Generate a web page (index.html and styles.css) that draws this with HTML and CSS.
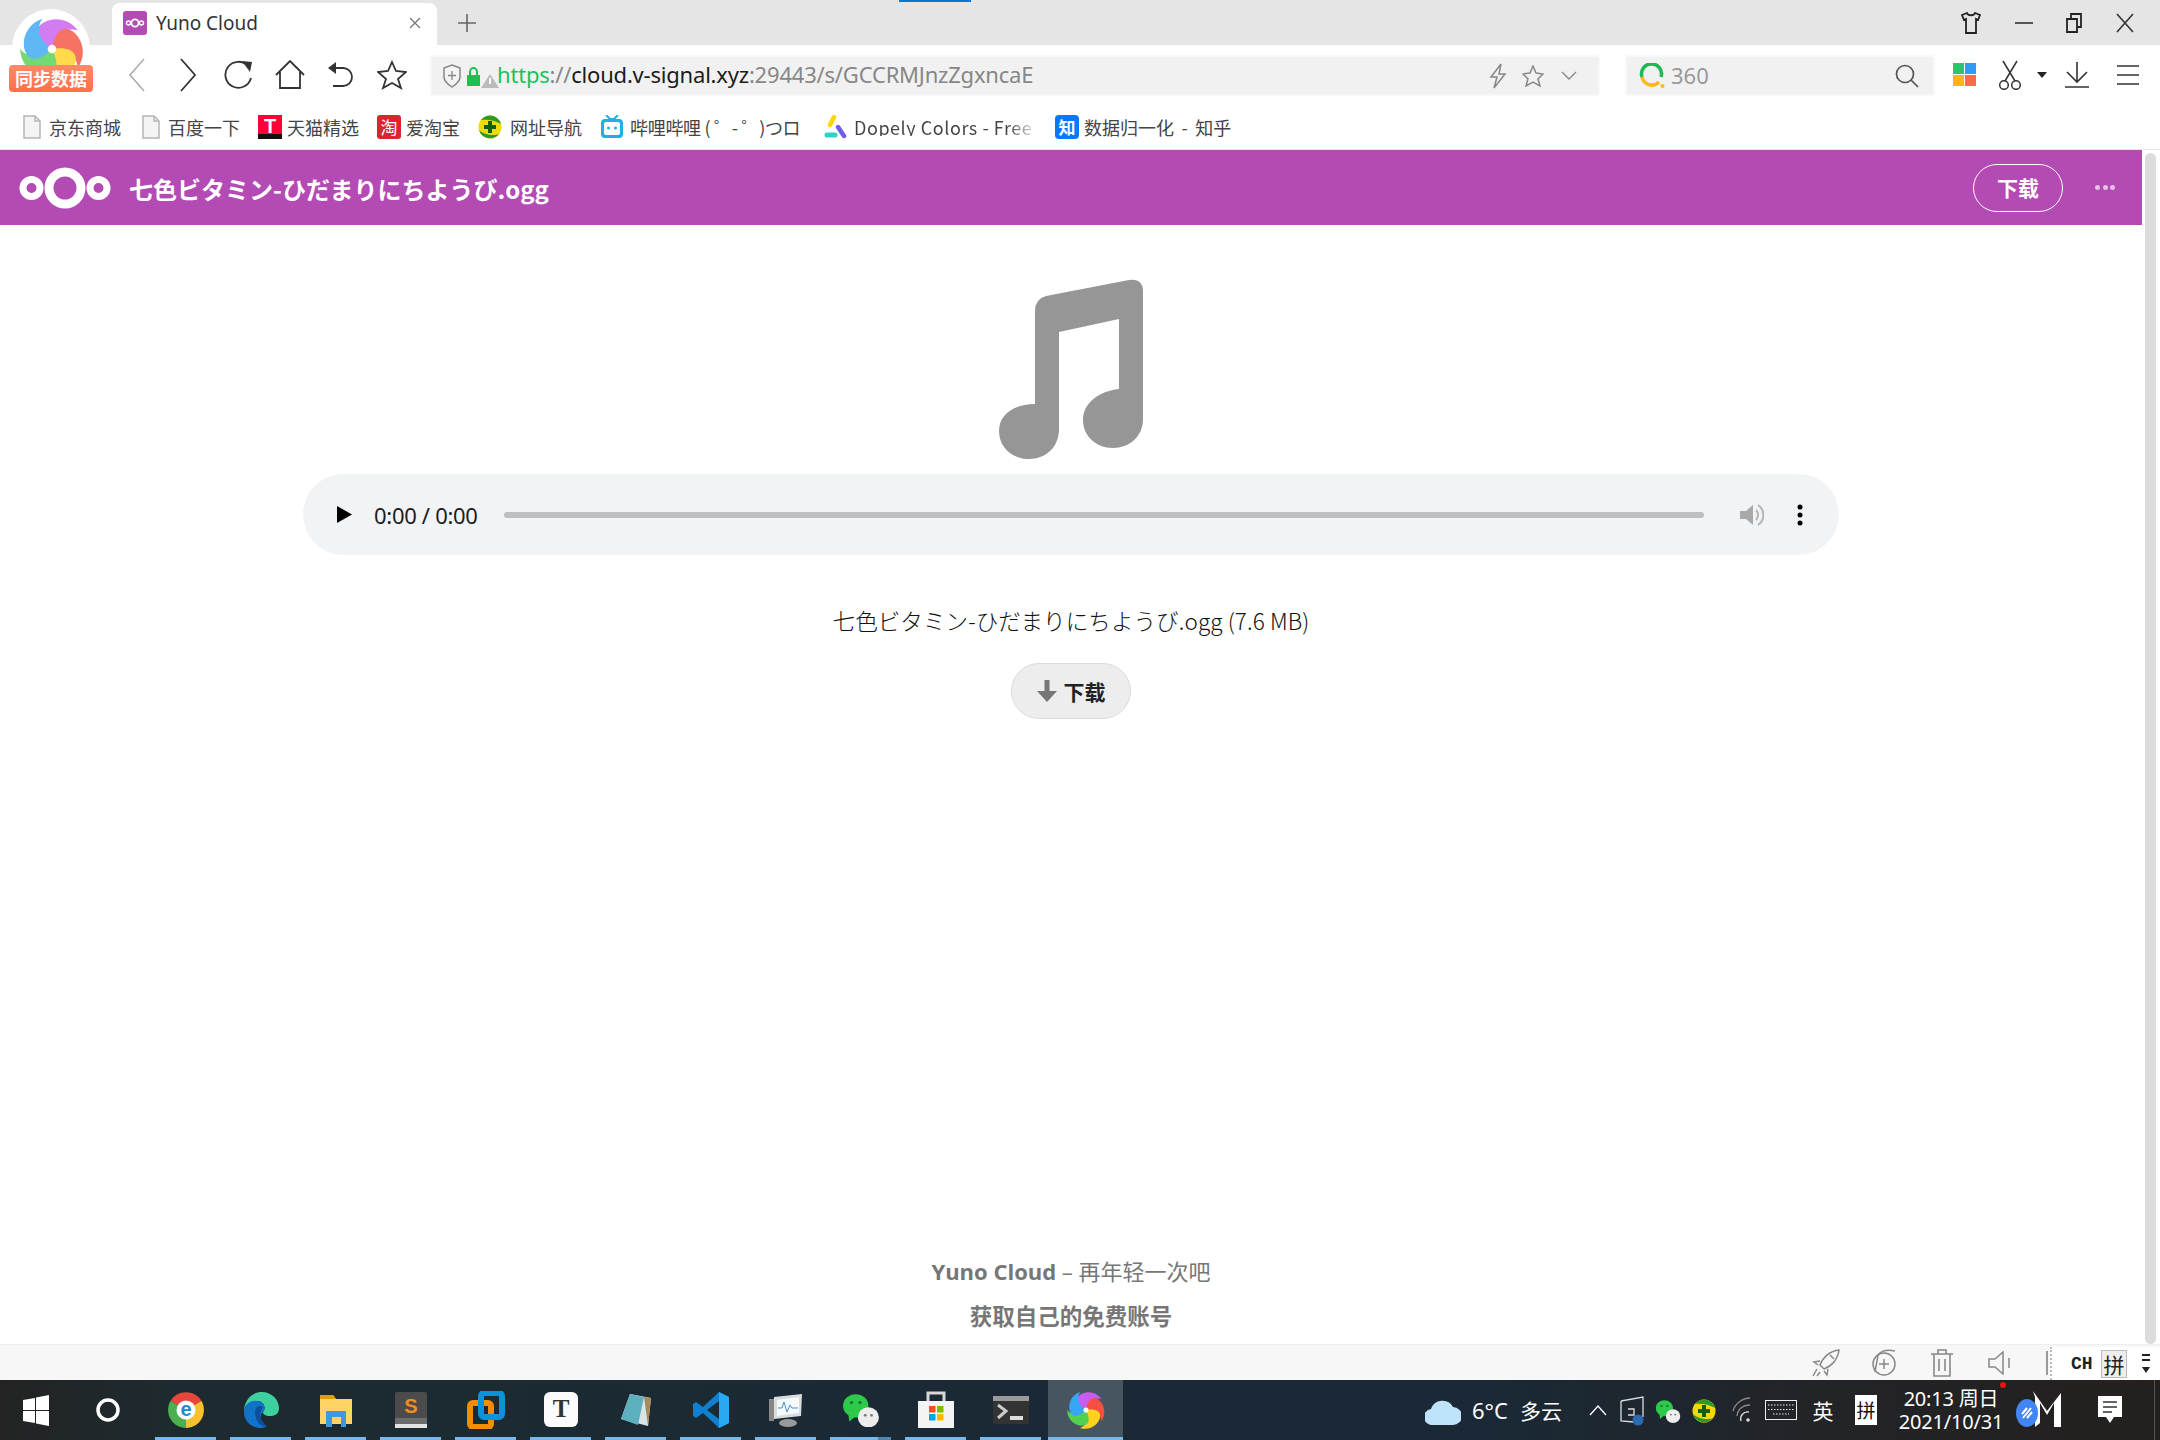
FILE: index.html
```html
<!DOCTYPE html>
<html lang="zh-CN">
<head>
<meta charset="utf-8">
<title>Yuno Cloud</title>
<link rel="stylesheet" href="styles.css">
</head>
<body>
<svg class="defs" width="0" height="0">
  <defs>
    <g id="swirl">
      <path fill="#c95cf0" d="M0 0C-8-4-14-10-12-16-7-26 12-28 21-15 12-18 3-12 0 0Z"/>
      <path fill="#f5503f" d="M0 0C-8-4-14-10-12-16-7-26 12-28 21-15 12-18 3-12 0 0Z" transform="rotate(72)"/>
      <path fill="#ffd21e" d="M0 0C-8-4-14-10-12-16-7-26 12-28 21-15 12-18 3-12 0 0Z" transform="rotate(144)"/>
      <path fill="#52d04f" d="M0 0C-8-4-14-10-12-16-7-26 12-28 21-15 12-18 3-12 0 0Z" transform="rotate(216)"/>
      <path fill="#36a7f5" d="M0 0C-8-4-14-10-12-16-7-26 12-28 21-15 12-18 3-12 0 0Z" transform="rotate(288)"/>
      <circle r="3.5" fill="#fff"/>
    </g>
    <g id="file-icon">
      <path d="M4 2H15L20 7V24H4Z" fill="#f4f4f4" stroke="#b5b5b5" stroke-width="1.5"/>
      <path d="M15 2V7H20" fill="none" stroke="#b5b5b5" stroke-width="1.5"/>
    </g>
    <g id="green-shield">
      <circle cx="12" cy="12" r="11.5" fill="#f2d90a"/>
      <path d="M12 .5A11.5 11.5 0 0 1 23 9C17 5 8 4 3 5A11.500 11.500 0 0 1 12 .5ZM1 15C6 20 16 21 21 19A11.500 11.500 0 0 1 1 15Z" fill="#2c9a2a"/>
      <path d="M10 6H14V10H18V14H14V18H10V14H6V10H10Z" fill="#0e5f12"/>
    </g>
    <g id="chat-bubbles">
      <ellipse cx="13" cy="12" rx="12" ry="11" fill="#2ec94a"/>
      <path d="M6 20L7 27 13 22Z" fill="#2ec94a"/>
      <circle cx="9" cy="9" r="1.600" fill="#157a2a"/>
      <circle cx="17" cy="9" r="1.600" fill="#157a2a"/>
      <ellipse cx="25" cy="23" rx="10" ry="9.500" fill="#ededed"/>
      <circle cx="22" cy="21" r="1.300" fill="#777"/>
      <circle cx="28" cy="21" r="1.300" fill="#777"/>
    </g>
  </defs>
</svg>

<div class="browser">
  <div class="titlebar">
    <div class="tab">
      <svg class="favicon" width="24" height="24" viewBox="0 0 24 24"><rect width="24" height="24" rx="3" fill="#b44ab4"/><g fill="none" stroke="#fff"><circle cx="12" cy="12" r="3.600" stroke-width="1.800"/><circle cx="5.500" cy="12" r="2" stroke-width="1.400"/><circle cx="18.500" cy="12" r="2" stroke-width="1.400"/></g></svg>
      <span class="tab-title">Yuno Cloud</span>
      <svg width="14" height="14" viewBox="0 0 14 14" class="tab-close"><path d="M2 2L12 12M12 2L2 12" stroke="#777" stroke-width="1.300"/></svg>
    </div>
    <svg class="tab-plus" width="18" height="18" viewBox="0 0 18 18"><path d="M9 0V18M0 9H18" stroke="#666" stroke-width="1.600"/></svg>
    <div class="blue-mark"></div>
    <div class="window-controls">
      <svg width="20" height="22" viewBox="0 0 20 22"><path d="M6 1L1 3 3 8 5 7V21H15V7L17 8 19 3 14 1C13 4 7 4 6 1Z" fill="none" stroke="#222" stroke-width="1.800"/></svg>
      <svg width="18" height="18" viewBox="0 0 18 18"><path d="M0 9H18" stroke="#333" stroke-width="1.600"/></svg>
      <svg width="16" height="20" viewBox="0 0 16 20"><path d="M1 6H11V19H1ZM5 6V1H15V14H11" fill="none" stroke="#222" stroke-width="1.800"/></svg>
      <svg width="18" height="20" viewBox="0 0 18 20"><path d="M1 1L17 19M17 1L1 19" stroke="#333" stroke-width="1.600"/></svg>
    </div>
  </div>

  <div class="toolbar">
    <div class="nav-cell"><svg width="18" height="36" viewBox="0 0 18 36"><path d="M16 2L2 18 16 34" fill="none" stroke="#aaa" stroke-width="1.500"/></svg></div>
    <div class="nav-cell"><svg width="18" height="36" viewBox="0 0 18 36"><path d="M2 2L16 18 2 34" fill="none" stroke="#333" stroke-width="1.800"/></svg></div>
    <div class="nav-cell"><svg width="30" height="32" viewBox="0 0 30 32"><path d="M24 6A13 13 0 1 0 27 18" fill="none" stroke="#333" stroke-width="1.800" transform="translate(0 1)"/><path d="M18 2L28 3 26 13Z" fill="#333"/></svg></div>
    <div class="nav-cell"><svg width="30" height="30" viewBox="0 0 30 30"><path d="M1 15L15 1 29 15M5 12V28H25V12" fill="none" stroke="#333" stroke-width="1.800"/></svg></div>
    <div class="nav-cell"><svg width="26" height="28" viewBox="0 0 26 28"><path d="M6 7H15A9 9 0 0 1 15 25H5" fill="none" stroke="#333" stroke-width="1.800"/><path d="M0 7L8 1V13Z" fill="#333"/></svg></div>
    <div class="nav-cell"><svg width="30" height="30" viewBox="0 0 30 30"><path d="M15 2L19 11 29 12 21 19 24 28 15 23 6 28 9 19 1 12 11 11Z" fill="none" stroke="#333" stroke-width="1.800"/></svg></div>

    <div class="addressbar">
      <svg class="sec" width="18" height="24" viewBox="0 0 18 24"><path d="M9 1L17 4V13C17 18 12 21 9 23 6 21 1 18 1 13V4Z" fill="#f4f4f4" stroke="#888" stroke-width="1.500"/><path d="M9 7V16M5 11.500H13" stroke="#888" stroke-width="1.300"/></svg>
      <svg class="sec-lock" width="34" height="24" viewBox="0 0 34 24"><path d="M3 8A4.500 5 0 0 1 12 8V11H10V8A2.500 3 0 0 0 5 8V11H3Z" fill="#17c251"/><rect x="1" y="11" width="13" height="11" fill="#17c251"/><path d="M24 10L33 24H15Z" fill="#bbb"/><path d="M24 14V20" stroke="#fff" stroke-width="2"/></svg>
      <span class="url"><span class="url-green">https</span><span class="url-gray">://</span><span class="url-dark">cloud.v-signal.xyz</span><span class="url-gray">:29443/s/GCCRMJnzZgxncaE</span></span>
      <svg class="addr-icon bolt" width="18" height="26" viewBox="0 0 18 26"><path d="M12 1L2 14H8L5 25 16 11H10Z" fill="none" stroke="#888" stroke-width="1.500"/></svg>
      <svg class="addr-icon star" width="22" height="22" viewBox="0 0 22 22"><path d="M11 1L14 8 21 9 16 14 18 21 11 17 4 21 6 14 1 9 8 8Z" fill="none" stroke="#888" stroke-width="1.500"/></svg>
      <svg class="addr-icon chev" width="16" height="10" viewBox="0 0 16 10"><path d="M1 1L8 8 15 1" fill="none" stroke="#888" stroke-width="1.400"/></svg>
    </div>

    <div class="searchbar">
      <svg width="26" height="26" viewBox="0 0 26 26"><path d="M3 14A10 10 0 1 1 22 14" fill="none" stroke="#1eb954" stroke-width="3.500"/><path d="M3 14A10 10 0 0 0 20 19" fill="none" stroke="#fdb813" stroke-width="3.500"/><circle cx="23.500" cy="23" r="2" fill="#fdb813"/></svg>
      <span class="search-text">360</span>
      <svg class="search-go" width="24" height="24" viewBox="0 0 24 24"><circle cx="10" cy="10" r="8.500" fill="none" stroke="#555" stroke-width="1.700"/><path d="M16 16L23 23" stroke="#555" stroke-width="1.700"/></svg>
    </div>

    <div class="tools">
      <svg class="t-grid" width="24" height="24" viewBox="0 0 24 24"><rect width="11" height="11" fill="#2fc46a"/><rect x="12" width="11" height="11" fill="#2e9bf5"/><rect y="12" width="11" height="11" fill="#fdb31a"/><rect x="12" y="12" width="11" height="11" fill="#fb6a4a"/></svg>
      <svg class="t-scis" width="24" height="30" viewBox="0 0 24 30"><path d="M5 1L17 21M19 1L7 21" stroke="#333" stroke-width="1.500"/><circle cx="6" cy="25" r="4.300" fill="none" stroke="#333" stroke-width="1.500"/><circle cx="18" cy="25" r="4.300" fill="none" stroke="#333" stroke-width="1.500"/></svg>
      <svg class="t-caret" width="10" height="6" viewBox="0 0 10 6"><path d="M0 0H10L5 6Z" fill="#222"/></svg>
      <svg class="t-down" width="24" height="26" viewBox="0 0 24 26"><path d="M12 0V20M2 10L12 20 22 10M0 25H24" fill="none" stroke="#333" stroke-width="1.600"/></svg>
      <svg class="t-menu" width="22" height="20" viewBox="0 0 22 20"><path d="M0 1H22M0 10H22M0 19H22" stroke="#333" stroke-width="1.600"/></svg>
    </div>
  </div>

  <div class="bookmarks">
    <div class="bm"><svg width="24" height="26" viewBox="0 0 24 26"><use href="#file-icon"/></svg><span>京东商城</span></div>
    <div class="bm"><svg width="24" height="26" viewBox="0 0 24 26"><use href="#file-icon"/></svg><span>百度一下</span></div>
    <div class="bm"><span class="bm-t">T</span><span>天猫精选</span></div>
    <div class="bm"><span class="bm-tao">淘</span><span>爱淘宝</span></div>
    <div class="bm bm-wide"><svg width="24" height="24" viewBox="0 0 24 24"><use href="#green-shield"/></svg><span>网址导航</span></div>
    <div class="bm"><svg width="24" height="24" viewBox="0 0 24 24"><path d="M6 0L10 4H14L18 0" fill="none" stroke="#23ade5" stroke-width="2"/><rect x="1" y="4" width="22" height="19" rx="4" fill="#23ade5"/><rect x="4" y="7" width="16" height="13" rx="2" fill="#fff"/><circle cx="8.500" cy="13" r="1.500" fill="#23ade5"/><circle cx="15.500" cy="13" r="1.500" fill="#23ade5"/></svg><span class="bm-bili">哔哩哔哩 ( ゜- ゜)つロ</span></div>
    <div class="bm"><svg width="24" height="24" viewBox="0 0 24 24"><path d="M10 2L6 10" stroke="#ffd600" stroke-width="4.500" stroke-linecap="round"/><path d="M14 12L20 21" stroke="#6c5ce7" stroke-width="4.500" stroke-linecap="round"/><path d="M3 20H11" stroke="#2fd0c6" stroke-width="5" stroke-linecap="round"/></svg><span class="bm-fade">Dopely Colors - Free</span></div>
    <div class="bm"><span class="bm-zhi">知</span><span class="bm-zhihu">数据归一化 - 知乎</span></div>
  </div>

  <div class="viewport">
    <div class="page">
      <header class="header">
        <svg class="logo" width="92" height="42" viewBox="0 0 92 42"><g fill="none" stroke="#fff"><circle cx="46" cy="21" r="16" stroke-width="9"/><circle cx="12.500" cy="21" r="8.500" stroke-width="7"/><circle cx="79.500" cy="21" r="8.500" stroke-width="7"/></g></svg>
        <h1 class="header-title">七色ビタミン-ひだまりにちようび.ogg</h1>
        <a class="header-btn">下载</a>
        <div class="header-dots"><i></i><i></i><i></i></div>
      </header>
      <main class="content">
        <svg class="note" width="144" height="180" viewBox="0 0 144 180"><path fill="#969696" d="M36 125V32Q36 20 47 17L130 1Q144-1 144 13V140C144 158 130 169 114 169 97 169 84 157 84 141 84 124 100 112 120 110V40L60 53V150C60 168 47 180 30 180 13 180 0 168 0 152 0 136 14 125 36 125Z"/></svg>
        <div class="player">
          <svg width="15" height="17" viewBox="0 0 15 17"><path d="M0 0L15 8.500 0 17Z" fill="#000"/></svg>
          <span class="player-time">0:00 / 0:00</span>
          <div class="player-track"></div>
          <svg class="player-vol" width="24" height="24" viewBox="0 0 24 24"><path d="M0 8H6L13 2V22L6 16H0Z" fill="#a9a9a9"/><path d="M16 7A7 7 0 0 1 16 17M18 2A12 12 0 0 1 18 22" fill="none" stroke="#b5b5b5" stroke-width="2"/></svg>
          <svg class="player-more" width="6" height="22" viewBox="0 0 6 22"><circle cx="3" cy="3" r="2.500"/><circle cx="3" cy="11" r="2.500"/><circle cx="3" cy="19" r="2.500"/></svg>
        </div>
        <p class="filename">七色ビタミン-ひだまりにちようび.ogg (7.6 MB)</p>
        <a class="download-btn"><svg width="20" height="22" viewBox="0 0 20 22"><path d="M7.500 0H12.500V11H20L10 22 0 11H7.500Z" fill="#777"/></svg><span>下载</span></a>
      </main>
      <footer class="footer">
        <p class="footer-line"><b>Yuno Cloud</b> – 再年轻一次吧</p>
        <p class="footer-line footer-signup">获取自己的免费账号</p>
      </footer>
    </div>
    <div class="scrollbar"><div class="scroll-thumb"></div></div>
  </div>

  <div class="statusbar">
    <div class="st-cell"><svg width="28" height="28" viewBox="0 0 28 28"><path d="M27 1C18 2 11 8 8 16L12 20C20 17 26 10 27 1ZM8 12L2 13 6 16M16 20L15 26 12 22M5 20L1 27M8 23L5 27M18 6L22 10" fill="none" stroke="#888" stroke-width="1.500"/></svg></div>
    <div class="st-cell"><svg width="28" height="28" viewBox="0 0 28 28"><circle cx="14" cy="15" r="11" fill="none" stroke="#888" stroke-width="1.500"/><path d="M14 10V20M9 15H19M5 23L8 6C12 1 20 1 25 2" fill="none" stroke="#888" stroke-width="1.500"/></svg></div>
    <div class="st-cell"><svg width="22" height="28" viewBox="0 0 22 28"><path d="M0 5H22M7 5V1H15V5M3 5V27H19V5M8 10V22M14 10V22" fill="none" stroke="#888" stroke-width="1.600"/></svg></div>
    <div class="st-cell"><svg width="24" height="24" viewBox="0 0 24 24"><path d="M1 8H7L15 1V23L7 16H1ZM21 7V17" fill="none" stroke="#888" stroke-width="1.500"/></svg></div>
    <div class="st-bar"></div>
    <div class="ime">
      <span class="ime-ch">CH</span>
      <span class="ime-pin">拼</span>
      <svg width="10" height="22" viewBox="0 0 10 22"><path d="M1 2H9M1 7H9" stroke="#222" stroke-width="2"/><path d="M1 14H9L5 20Z" fill="#222"/></svg>
    </div>
  </div>

  <div class="taskbar">
    <div class="tb-sys"><svg width="26" height="33" viewBox="0 0 26 33"><path fill="#fff" d="M0 6L12 4V16H0ZM13 3.500L26 1V16H13ZM0 17H12V29L0 27ZM13 17H26V32L13 29.500Z"/></svg></div>
    <div class="tb-sys"><svg width="24" height="24" viewBox="0 0 24 24"><circle cx="12" cy="12" r="10" fill="none" stroke="#fff" stroke-width="3.500"/></svg></div>
    <div class="apps">
      <div class="app"><svg width="36" height="36" viewBox="0 0 36 36"><path d="M18 18L2.500 9A18 18 0 0 1 33.500 9Z" fill="#e8453c"/><path d="M18 18L33.500 9A18 18 0 0 1 18 36Z" fill="#fbc02d"/><path d="M18 18V36A18 18 0 0 1 2.500 9Z" fill="#4caf50"/><circle cx="18" cy="18" r="9.500" fill="#fff"/><text x="18" y="24" class="app-e">e</text></svg></div>
      <div class="app"><svg width="36" height="36" viewBox="0 0 36 36"><path d="M1 20C1 8 9 0 19 0 29 0 36 8 36 16 36 22 32 24 27 24 22 24 20 22 20 20 24 15 20 9 14 9 7 9 1 14 1 20Z" fill="#3fd0a0"/><path d="M1 20C1 13 7 8 14 9 20 9 24 15 20 20 16 24 17 31 24 34 22 35 20 36 18 36 8 36 1 29 1 20Z" fill="#1173c7"/><path d="M12 20C12 14 18 12 20 16 16 20 16 28 24 34 17 36 12 28 12 20Z" fill="#0c4f9e"/></svg></div>
      <div class="app"><svg width="32" height="34" viewBox="0 0 32 34"><path d="M0 2H13L16 6H32V31H0Z" fill="#fed464"/><path d="M0 2H13L16 6H0Z" fill="#d99f0c"/><path d="M6 18H26V34H21V24H12V34H6Z" fill="#3d9ae0"/></svg></div>
      <div class="app"><svg width="34" height="38" viewBox="0 0 34 38"><rect x="1" y="1" width="32" height="32" rx="2" fill="#4b4b4b"/><path d="M1 27H33V35H1Z" fill="#6b6b6b"/><path d="M1 33H33V37H1Z" fill="#e4e4e4"/><text x="17" y="22" class="app-s">S</text></svg></div>
      <div class="app"><svg width="38" height="38" viewBox="0 0 38 38"><rect x="3" y="12" width="21" height="24" rx="3" fill="none" stroke="#f28c00" stroke-width="6"/><rect x="14" y="2" width="21" height="24" rx="3" fill="none" stroke="#0a93d8" stroke-width="6"/></svg></div>
      <div class="app"><svg width="34" height="36" viewBox="0 0 34 36"><rect x="0" y="0" width="34" height="35" rx="6" fill="#fbfbfb"/><text x="17" y="25" class="app-t">T</text></svg></div>
      <div class="app"><svg width="32" height="34" viewBox="0 0 32 34"><path d="M10 1L31 5 28 33 1 26Z" fill="#d9e6e8"/><path d="M10 1L24 4 18 32 1 26Z" fill="#5fb0bf"/><path d="M24 4L31 5 28 33Z" fill="#a68c5b"/></svg></div>
      <div class="app"><svg width="36" height="36" viewBox="0 0 36 36"><path d="M26 0L36 5V31L26 36 10 21 3 26 0 24V12L3 10 10 15Z" fill="#0f7fd0"/><path d="M26 9L14 18 26 27Z" fill="#1b2a35"/><path d="M26 0L36 5V31L26 36Z" fill="#28a9f2"/></svg></div>
      <div class="app"><svg width="36" height="34" viewBox="0 0 36 34"><path d="M6 4L34 1 33 23 6 26Z" fill="#d8dde0"/><path d="M9 7L31 4V20L9 23Z" fill="#f5fafc"/><path d="M10 15H14L16 9 19 19 22 12 24 15H30" fill="none" stroke="#4a90c2"/><ellipse cx="20" cy="30" rx="9" ry="4" fill="#9a9a9a"/><rect x="1" y="6" width="5" height="22" fill="#888"/></svg></div>
      <div class="app app-split"><svg width="38" height="34" viewBox="0 0 36 32"><use href="#chat-bubbles"/></svg></div>
      <div class="app"><svg width="36" height="38" viewBox="0 0 36 38"><path d="M10 10V2H26V10" fill="none" stroke="#d8d8d8" stroke-width="3"/><path d="M0 10H36V37H0Z" fill="#f4f4f4"/><rect x="11" y="15" width="6.500" height="6.500" fill="#f25022"/><rect x="19" y="15" width="6.500" height="6.500" fill="#7fba00"/><rect x="11" y="23" width="6.500" height="6.500" fill="#00a4ef"/><rect x="19" y="23" width="6.500" height="6.500" fill="#ffb900"/></svg></div>
      <div class="app"><svg width="36" height="28" viewBox="0 0 36 28"><rect width="36" height="28" rx="2" fill="#333"/><path d="M0 0H36V5H0Z" fill="#999"/><path d="M5 9L13 15 5 22" fill="none" stroke="#ccc" stroke-width="3"/><path d="M17 22H30" stroke="#ddd" stroke-width="4"/></svg></div>
      <div class="app app-active"><svg width="38" height="38" viewBox="-26 -26 52 52"><use href="#swirl"/></svg></div>
    </div>
    <div class="tray">
      <svg class="tray-cloud" width="36" height="30" viewBox="0 0 36 30"><path d="M8 30A8 8 0 0 1 6 14 12 12 0 0 1 28 12 9 9 0 0 1 28 30Z" fill="#bfe3fb"/></svg>
      <span class="tray-temp">6°C</span>
      <span class="tray-weather">多云</span>
      <div class="tray-caret"><svg width="18" height="11" viewBox="0 0 18 11"><path d="M1 10L9 1 17 10" fill="none" stroke="#fff" stroke-width="1.300"/></svg></div>
      <div class="tray-cell"><svg width="24" height="30" viewBox="0 0 24 30"><path d="M1 5L23 1V21M1 5V25L14 26" fill="none" stroke="#ddd" stroke-width="1.300"/><path d="M8 13H14V19H8" fill="none" stroke="#ddd" stroke-width="1.300"/><circle cx="18" cy="24" r="5.500" fill="#2a6bb0"/></svg></div>
      <div class="tray-cell"><svg width="26" height="24" viewBox="0 0 36 32"><use href="#chat-bubbles"/></svg></div>
      <div class="tray-cell"><svg width="24" height="24" viewBox="0 0 24 24"><use href="#green-shield"/></svg></div>
      <div class="tray-wifi"><svg width="20" height="26" viewBox="0 0 20 26"><path d="M1 14A18 18 0 0 1 18 1M5 19A12 12 0 0 1 18 8" fill="none" stroke="#888" stroke-width="1.400"/><path d="M9 24A7 7 0 0 1 17 15" fill="none" stroke="#ddd" stroke-width="1.400"/><circle cx="16" cy="23" r="1.800" fill="#ddd"/></svg></div>
      <div class="tray-kbd"><svg width="32" height="20" viewBox="0 0 32 20"><rect x=".5" y=".5" width="31" height="19" fill="none" stroke="#eee"/><path d="M3 5H29M3 9.500H29M8 14H24" stroke="#eee" stroke-dasharray="1.500 1.500"/></svg></div>
      <span class="tray-ying">英</span>
      <div class="tray-pin-cell"><span class="tray-pin">拼</span></div>
      <div class="clock"><span>20:13 周日</span><span>2021/10/31</span><i class="clock-dot"></i></div>
      <div class="tray-m">
        <svg width="30" height="38" viewBox="0 0 30 38"><path d="M1 0L3 6V36L8 32V12L15 24 22 12V36H29V2L15 20Z" fill="#fff"/></svg>
        <svg class="tray-link" width="22" height="28" viewBox="0 0 22 28"><ellipse cx="11" cy="14" rx="11" ry="14" fill="#4285f4"/><path d="M7 19L15 9M6 15L11 9M11 19L16 13" stroke="#fff" stroke-width="2" fill="none"/></svg>
      </div>
      <div class="tray-note"><svg width="24" height="28" viewBox="0 0 24 28"><path d="M0 0H24V21H16L12 27 8 21H0Z" fill="#fff"/><path d="M5 6H19M5 11H19M5 16H14" stroke="#333" stroke-width="1.300"/></svg></div>
      <div class="tray-edge"></div>
    </div>
  </div>

  <div class="sync-badge">
    <div class="sync-bubble"><svg class="sync-swirl" width="64" height="64" viewBox="-26 -26 52 52"><use href="#swirl"/></svg></div>
    <span class="sync-label">同步数据</span>
  </div>
</div>
</body>
</html>
```

FILE: styles.css
```css
* { box-sizing: border-box; }
html, body { margin: 0; padding: 0; }
body { font-family: "Noto Sans", "Noto Sans CJK SC", sans-serif; color: #222; background: #fff; }
.defs { display: block; height: 0; }
svg { display: block; flex: none; }
.browser { position: relative; display: flex; flex-direction: column; width: 2160px; height: 1440px; overflow: hidden; }

/* title bar */
.titlebar { position: relative; display: flex; align-items: flex-end; height: 45px; background: #e5e5e5; padding-left: 112px; flex: none; }
.tab { display: flex; align-items: center; width: 325px; height: 42px; background: #fff; border-radius: 8px 8px 0 0; padding: 0 15px 3px 11px; }
.tab-title { margin: 2px 0 0 9px; font: 19px/1 "Noto Sans", sans-serif; color: #333; flex: 1; }
.tab-plus { margin: 0 0 13px 21px; }
.blue-mark { position: absolute; left: 899px; top: 0; width: 72px; height: 2px; background: #0078d7; }
.window-controls { display: flex; align-items: center; margin-left: auto; height: 45px; width: 199px; justify-content: space-between; padding: 0 26px 0 0; }

/* toolbar */
.toolbar { display: flex; align-items: center; height: 55px; padding: 6px 0 0 111px; background: #fff; flex: none; }
.nav-cell { display: flex; align-items: center; justify-content: center; width: 51px; height: 40px; margin-top: -2px; }
.addressbar { display: flex; align-items: center; width: 1170px; height: 41px; margin-left: 13px; padding: 0 21px 0 11px; background: #f1f1f1; border: 2px solid #f8f8f8; border-radius: 3px; }
.sec-lock { margin-left: 5px; }
.url { margin: -3px 0 0 -3px; font: 22px/1 "Noto Sans", sans-serif; white-space: nowrap; flex: 1; letter-spacing: -.2px; }
.url-green { color: #18c25a; }
.url-gray { color: #878787; }
.url-dark { color: #1c1c1c; }
.addr-icon { margin-left: 15px; }
.addr-icon.chev { margin-left: 17px; }
.searchbar { display: flex; align-items: center; width: 310px; height: 41px; margin-left: 25px; padding: 0 14px 0 12px; background: #f1f1f1; border: 2px solid #f8f8f8; border-radius: 3px; }
.search-text { margin: -2px 0 0 6px; font: 22px/1 "Noto Sans", sans-serif; color: #999; flex: 1; }
.tools { display: flex; align-items: center; margin-top: -1px; }
.t-grid { margin-left: 18px; }
.t-scis { margin-left: 21px; }
.t-caret { margin-left: 15px; }
.t-down { margin-left: 18px; }
.t-menu { margin-left: 28px; }

/* bookmarks */
.bookmarks { display: flex; align-items: center; height: 50px; padding: 4px 0 0 20px; gap: 18px; background: #fff; border-bottom: 1px solid #e6e6e6; flex: none; font: 18px/1 "Noto Sans CJK SC", sans-serif; color: #444; }
.bm { display: flex; align-items: center; gap: 5px; white-space: nowrap; }
.bm-wide { gap: 8px; }
.bm-t { display: block; width: 24px; height: 24px; background: linear-gradient(#ff0036 78%, #111 78%); color: #fff; font: bold 20px/22px "Liberation Sans", sans-serif; text-align: center; }
.bm-tao { display: block; width: 24px; height: 24px; background: #d7272e; color: #fff; font: 17px/24px "Noto Sans CJK SC", sans-serif; text-align: center; border-radius: 3px; }
.bm-zhi { display: block; width: 24px; height: 24px; background: #0778ff; color: #fff; font: bold 17px/24px "Noto Sans CJK SC", sans-serif; text-align: center; border-radius: 4px; }
.bm-bili { display: block; width: 176px; margin-left: 1px; letter-spacing: -.3px; }
.bm-fade { display: block; width: 183px; margin-left: 1px; letter-spacing: .55px; color: transparent; background: linear-gradient(90deg, #444 84%, #ddd 98%); -webkit-background-clip: text; background-clip: text; }
.bm-zhihu { word-spacing: 3.500px; }

/* page */
.viewport { display: flex; flex: 1; min-height: 0; background: #fff; }
.page { display: flex; flex-direction: column; width: 2142px; flex: none; }
.header { display: flex; align-items: center; height: 75px; padding: 0 0 0 19px; background: #b44ab4; color: #fff; flex: none; }
.logo { margin-top: 1px; }
.header-title { margin: 3px 0 0 18px; font: bold 24px/1 "Noto Sans CJK JP", sans-serif; flex: 1; white-space: nowrap; }
.header-btn { display: block; width: 90px; height: 48px; border: 1.500px solid #fff; border-radius: 24px; font: bold 21px/45px "Noto Sans CJK SC", sans-serif; text-align: center; }
.header-dots { display: flex; gap: 2.500px; width: 79px; padding-left: 32px; }
.header-dots i { display: block; width: 5px; height: 5px; border-radius: 50%; background: rgba(255,255,255,.65); }
.content { display: flex; flex-direction: column; align-items: center; flex: 1; padding-top: 54px; }
.player { display: flex; align-items: center; width: 1536px; height: 81px; margin-top: 15px; padding: 0 0 0 34px; background: #f1f3f4; border-radius: 41px; }
.player-time { margin-left: 22px; font: 22px/1 "Noto Sans", sans-serif; color: #1c1c1c; width: 130px; white-space: nowrap; letter-spacing: -.3px; }
.player-track { width: 1200px; height: 6px; background: #bebfc1; border-radius: 3px; }
.player-vol { margin-left: 36px; }
.player-more { margin-left: 33px; }
.filename { margin: 50px 0 0; font: 300 22.500px/30px "Noto Sans CJK JP", sans-serif; color: #111; letter-spacing: .1px; }
.download-btn { display: flex; align-items: center; justify-content: center; gap: 7px; width: 120px; height: 56px; margin-top: 28px; background: #ededed; border: 1px solid #dbdbdb; border-radius: 28px; font: bold 21px/1 "Noto Sans CJK SC", sans-serif; color: #222; }
.footer { padding-bottom: 5px; text-align: center; color: #767676; flex: none; }
.footer-line { margin: 0; font: 22px/45px "Open Sans", "Noto Sans CJK SC", sans-serif; }
.footer-signup { font-size: 22.500px; font-weight: bold; }
.scrollbar { flex: 1; padding: 3px 4px 0 3px; }
.scroll-thumb { height: 100%; background: #dcdcdc; border-radius: 6px; }

/* status bar */
.statusbar { display: flex; align-items: center; justify-content: flex-end; height: 36px; background: #f7f7f7; border-top: 1px solid #eee; flex: none; }
.st-cell { display: flex; align-items: center; justify-content: center; width: 58px; }
.st-bar { width: 19px; height: 24px; margin-right: 2px; border-right: 2px solid #999; }
.ime { display: flex; align-items: center; align-self: flex-end; width: 110px; height: 33px; background: #fff; border-left: 2px dotted #bbb; padding-left: 19px; color: #222; }
.ime-ch { font: bold 18px/1 "Liberation Mono", monospace; width: 29px; }
.ime-pin { display: block; width: 26px; height: 28px; margin-left: 1px; background: #eee; border: 1px solid #bbb; font: 21px/26px "Noto Sans CJK SC", sans-serif; text-align: center; }
.ime svg { margin-left: 14px; }

/* taskbar */
.taskbar { display: flex; align-items: stretch; height: 60px; background: linear-gradient(90deg, #232323 0, #1d2b30 180px, #1a2935 1000px, #1a2935 1500px, #222428 1800px, #24201e 100%); color: #fff; flex: none; }
.tb-sys { display: flex; align-items: center; justify-content: center; width: 72px; }
.apps { display: flex; margin-left: 4px; }
.app { position: relative; display: flex; align-items: center; justify-content: center; width: 75px; }
.app::after { content: ""; position: absolute; left: 7px; right: 7px; bottom: 0; height: 3px; background: #76b9ed; }
.app-split::after { background: linear-gradient(90deg, #76b9ed 78%, #4f86ad 78%); }
.app-active { background: #46555f; }
.app-active::after { left: 0; right: 0; }
.app-e { font: bold 20px "Liberation Sans", sans-serif; fill: #1e88d0; text-anchor: middle; }
.app-s { font: bold 20px "Liberation Sans", sans-serif; fill: #f28c1e; text-anchor: middle; }
.app-t { font: bold 25px "Liberation Serif", serif; fill: #333; text-anchor: middle; }
.tray { display: flex; align-items: center; margin-left: auto; padding-right: 5px; }
.tray-temp { margin-left: 11px; width: 48px; font: 22px/1 "Noto Sans", sans-serif; }
.tray-weather { font: 21px/1 "Noto Sans CJK SC", sans-serif; width: 42px; }
.tray-caret { display: flex; justify-content: center; width: 32px; margin-left: 20px; }
.tray-cell { display: flex; justify-content: center; width: 36px; margin-top: 2px; }
.tray-wifi { display: flex; justify-content: center; width: 40px; }
.tray-kbd { display: flex; justify-content: center; width: 38px; }
.tray-ying { width: 46px; text-align: center; font: 21px/1 "Noto Sans CJK SC", sans-serif; }
.tray-pin-cell { display: flex; justify-content: center; width: 40px; }
.tray-pin { display: block; width: 22px; height: 30px; background: #fff; color: #111; font: 19px/30px "Noto Sans CJK SC", sans-serif; text-align: center; }
.clock { position: relative; display: flex; flex-direction: column; align-items: center; gap: 2px; width: 130px; font: 20px/21px "Noto Sans", "Noto Sans CJK SC", sans-serif; letter-spacing: -.2px; white-space: nowrap; }
.clock-dot { position: absolute; right: 10px; top: -6px; width: 6px; height: 6px; border-radius: 50%; background: #f01010; }
.tray-m { position: relative; display: flex; justify-content: center; width: 59px; padding-left: 2px; }
.tray-link { position: absolute; left: 0; top: 8px; }
.tray-note { display: flex; justify-content: center; width: 70px; }
.tray-edge { width: 1px; height: 60px; margin-left: 9px; background: #555; }

/* floating sync badge */
.sync-badge { position: absolute; left: 9px; top: 9px; width: 84px; }
.sync-bubble { width: 78px; height: 56px; margin-left: 3px; padding: 8px 0 0 8px; background: #fff; border-radius: 39px 39px 0 0; }
.sync-swirl { opacity: .8; }
.sync-label { position: relative; display: block; width: 84px; height: 27px; background: linear-gradient(#ff8a65, #ff6f4d); border-radius: 4px; color: #fff; font: bold 18px/27px "Noto Sans CJK SC", sans-serif; text-align: center; }
```
